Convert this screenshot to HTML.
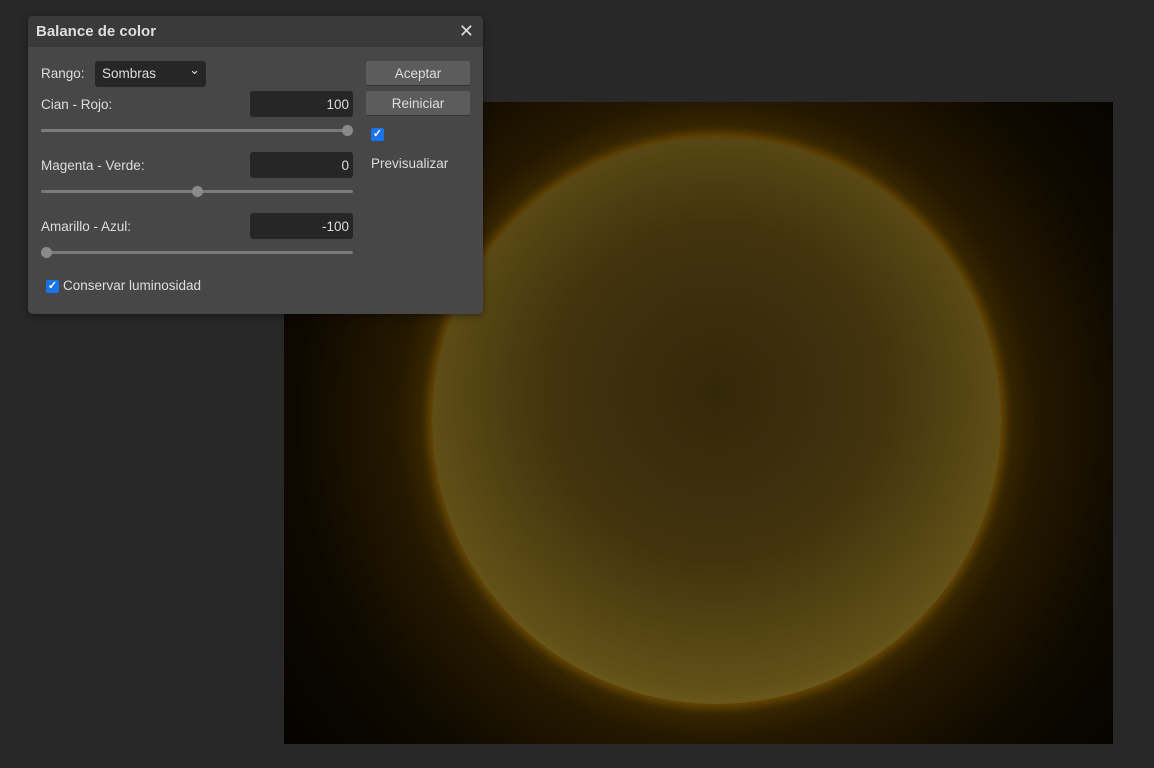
<!DOCTYPE html>
<html><head><meta charset="utf-8"><style>
*{box-sizing:border-box}
body{margin:0;width:1154px;height:768px;background:#282828;font-family:"Liberation Sans",sans-serif;overflow:hidden;position:relative;color:#ddd}
#img{position:absolute;left:284px;top:102px;width:829px;height:642px;overflow:hidden;
background:radial-gradient(circle at 432px 318px,#3a2800 0px,#3a2800 290px,#241800 320px,#0e0900 420px,#030200 560px)}
#sun{position:absolute;left:148px;top:35px;width:569px;height:567px;border-radius:50%;
background:radial-gradient(circle at 50% 45%,#34280a 0%,#43340e 40%,#615017 70%,#857024 86%,#ae9538 95%,#e6d070 100%);
box-shadow:0 0 10px 3px rgba(170,120,10,.5)}
#dlg{position:absolute;left:28px;top:16px;width:455px;height:298px;background:#474747;border-radius:5px;overflow:hidden;box-shadow:0 2px 8px rgba(0,0,0,.4)}
#tb{height:31px;background:#3a3a3a;font-weight:bold;font-size:15px;color:#ddd;padding:7px 8px}
#x{position:absolute;right:9px;top:5px;font-size:18px;font-weight:normal;color:#ddd}
.l{position:absolute;font-size:13.5px;color:#ddd}
.in{position:absolute;left:222px;width:103px;height:26px;background:#262626;border-radius:3px;text-align:right;padding:6px 4px;font-size:13.5px;color:#ddd}
.tr{position:absolute;left:13px;width:312px;height:3px;background:#7a7a7a;border-radius:2px}
.th{position:absolute;width:11px;height:11px;border-radius:50%;background:#8a8a8a;top:-4px}
.btn{position:absolute;left:338px;width:104px;height:25px;background:#5c5c5c;border-radius:2px;border-bottom:1px solid #333;text-align:center;font-size:13.5px;padding-top:5px;color:#ddd}
.cb{position:absolute;width:13px;height:13px;background:#1a73e8;border-radius:2px;color:#fff;font-size:11px;line-height:13px;text-align:center;font-weight:bold}
</style></head><body>
<div id="img"><div id="sun"></div></div>
<div id="dlg">
<div id="tb">Balance de color<span id="x">✕</span></div>
<div class="l" style="left:13px;top:50px">Rango:</div>
<div style="position:absolute;left:67px;top:45px;width:111px;height:26px;background:#262626;border-radius:3px;font-size:13.5px;padding:5px 7px">Sombras<span style="position:absolute;right:6px;top:2px;font-size:13px;font-family:'DejaVu Sans'">⌄</span></div>
<div class="l" style="left:13px;top:81px">Cian - Rojo:</div>
<div class="in" style="top:75px">100</div>
<div class="tr" style="top:113px"><div class="th" style="left:301px"></div></div>
<div class="l" style="left:13px;top:142px">Magenta - Verde:</div>
<div class="in" style="top:136px">0</div>
<div class="tr" style="top:174px"><div class="th" style="left:151px"></div></div>
<div class="l" style="left:13px;top:203px">Amarillo - Azul:</div>
<div class="in" style="top:197px">-100</div>
<div class="tr" style="top:235px"><div class="th" style="left:0px"></div></div>
<div class="cb" style="left:18px;top:264px">✓</div>
<div class="l" style="left:35px;top:262px">Conservar luminosidad</div>
<div class="btn" style="top:45px">Aceptar</div>
<div class="btn" style="top:75px">Reiniciar</div>
<div class="cb" style="left:343px;top:112px">✓</div>
<div class="l" style="left:343px;top:140px">Previsualizar</div>
</div>
</body></html>
